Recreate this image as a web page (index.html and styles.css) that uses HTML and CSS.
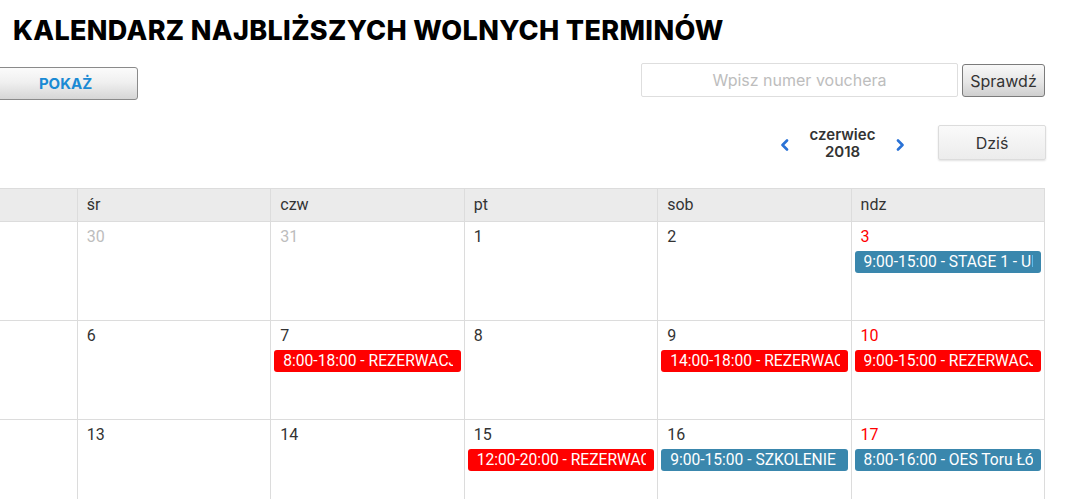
FILE: index.html
```html
<!DOCTYPE html>
<html lang="pl">
<head>
<meta charset="utf-8">
<title>Kalendarz</title>
<link rel="stylesheet" href="styles.css">
</head>
<body>
<header class="page-head">
  <h1 class="title">KALENDARZ NAJBLIŻSZYCH WOLNYCH TERMINÓW</h1>
</header>

<div class="toolbar">
  <button class="btn-show" type="button">POKAŻ</button>
  <form class="voucher">
    <input class="voucher-input" type="text" placeholder="Wpisz numer vouchera">
    <button class="btn-check" type="button">Sprawdź</button>
  </form>
</div>

<div class="cal-nav">
  <button class="arrow" type="button" aria-label="poprzedni">
    <svg width="10" height="12" viewBox="0 0 10 12"><path d="M7 1.5 L2.5 6 L7 10.5" fill="none" stroke="#2a72d6" stroke-width="2.6" stroke-linecap="round" stroke-linejoin="round"/></svg>
  </button>
  <div class="month"><span>czerwiec</span><span>2018</span></div>
  <button class="arrow" type="button" aria-label="następny">
    <svg width="10" height="12" viewBox="0 0 10 12"><path d="M3 1.5 L7.5 6 L3 10.5" fill="none" stroke="#2a72d6" stroke-width="2.6" stroke-linecap="round" stroke-linejoin="round"/></svg>
  </button>
  <button class="btn-today" type="button">Dziś</button>
</div>

<div class="calendar">
  <div class="cal-head">
    <div class="hcell">pon</div><div class="hcell">wt</div><div class="hcell">śr</div><div class="hcell">czw</div><div class="hcell">pt</div><div class="hcell">sob</div><div class="hcell">ndz</div>
  </div>
  <div class="week">
    <div class="day other"><span class="num">28</span></div>
    <div class="day other"><span class="num">29</span></div>
    <div class="day other"><span class="num">30</span></div>
    <div class="day other"><span class="num">31</span></div>
    <div class="day"><span class="num">1</span></div>
    <div class="day"><span class="num">2</span></div>
    <div class="day sun"><span class="num">3</span><div class="event blue"><span class="event-text">9:00-15:00 - STAGE 1 - UI</span></div></div>
  </div>
  <div class="week">
    <div class="day"><span class="num">4</span></div>
    <div class="day"><span class="num">5</span></div>
    <div class="day"><span class="num">6</span></div>
    <div class="day"><span class="num">7</span><div class="event red"><span class="event-text">8:00-18:00 - REZERWACJA</span></div></div>
    <div class="day"><span class="num">8</span></div>
    <div class="day"><span class="num">9</span><div class="event red"><span class="event-text">14:00-18:00 - REZERWACJA</span></div></div>
    <div class="day sun"><span class="num">10</span><div class="event red"><span class="event-text">9:00-15:00 - REZERWACJA</span></div></div>
  </div>
  <div class="week">
    <div class="day"><span class="num">11</span></div>
    <div class="day"><span class="num">12</span></div>
    <div class="day"><span class="num">13</span></div>
    <div class="day"><span class="num">14</span></div>
    <div class="day"><span class="num">15</span><div class="event red"><span class="event-text">12:00-20:00 - REZERWACJA</span></div></div>
    <div class="day"><span class="num">16</span><div class="event blue"><span class="event-text">9:00-15:00 - SZKOLENIE</span></div></div>
    <div class="day sun"><span class="num">17</span><div class="event blue"><span class="event-text">8:00-16:00 - OES Toru Łódź</span></div></div>
  </div>
</div>
</body>
</html>
```

FILE: styles.css
```css
html, body {
  margin: 0;
  padding: 0;
  background: #fff;
  overflow: hidden;
}
body {
  font-family: Roboto, "Liberation Sans", sans-serif;
  color: #333;
}

.page-head {
  padding: 13px 0 0 13px;
}
.title {
  margin: 0;
  font-family: Inter, "Liberation Sans", sans-serif;
  font-weight: 800;
  font-size: 27px;
  line-height: 36px;
  color: #000;
  letter-spacing: 0.35px;
}

.toolbar {
  display: flex;
  justify-content: space-between;
  align-items: flex-start;
  margin-top: 14px;
  padding-right: 20px;
}
.btn-show {
  margin-left: -7px;
  margin-top: 4px;
  width: 145px;
  height: 33px;
  border: 1px solid #8a8a8a;
  border-radius: 3px;
  background: linear-gradient(#fbfbfb, #f0f0f0 45%, #d6d6d6);
  font-family: Inter, "Liberation Sans", sans-serif;
  font-weight: 700;
  font-size: 15px;
  color: #1a8ad4;
  padding: 0;
}
.voucher {
  display: flex;
  gap: 4px;
  align-items: flex-start;
}
.voucher-input {
  box-sizing: border-box;
  width: 317px;
  height: 34px;
  border: 1px solid #dedede;
  border-radius: 2px;
  text-align: center;
  font-family: Inter, "Liberation Sans", sans-serif;
  font-size: 16px;
  color: #333;
  padding: 0 8px;
  outline: none;
}
.voucher-input::placeholder {
  color: #bdbdbd;
}
.btn-check {
  margin-top: 1px;
  box-sizing: border-box;
  width: 83px;
  height: 33px;
  border: 1px solid #7b7b7b;
  border-radius: 3px;
  background: linear-gradient(#f8f8f8, #e6e6e6 55%, #cfcfcf);
  font-family: Inter, "Liberation Sans", sans-serif;
  font-size: 16px;
  color: #333;
  padding: 0;
}

.cal-nav {
  display: flex;
  justify-content: flex-end;
  align-items: center;
  padding-right: 19px;
  margin-top: 25px;
}
.arrow {
  border: 0;
  background: none;
  padding: 0;
  width: 12px;
  height: 14px;
  display: flex;
  align-items: center;
  justify-content: center;
  margin-top: 4px;
}
.month {
  display: flex;
  flex-direction: column;
  align-items: center;
  width: 103px;
  font-family: Inter, "Liberation Sans", sans-serif;
  font-weight: 600;
  font-size: 15px;
  line-height: 17px;
  color: #333;
}
.btn-today {
  margin-left: 32px;
  box-sizing: border-box;
  width: 108px;
  height: 35px;
  border: 1px solid #dcdcdc;
  border-radius: 2px;
  background: linear-gradient(#fafafa, #ececec);
  box-shadow: 0 1px 2px rgba(0,0,0,0.12);
  font-family: Inter, "Liberation Sans", sans-serif;
  font-size: 16px;
  color: #333;
  padding: 0;
}

.calendar {
  margin-top: 28px;
  margin-left: -310px;
  width: 1354px;
  border-left: 1px solid #dcdcdc;
}
.cal-head,
.week {
  display: grid;
  grid-template-columns: repeat(7, 1fr);
}
.cal-head {
  background: #ebebeb;
  border-top: 1px solid #dcdcdc;
  border-bottom: 1px solid #dcdcdc;
}
.hcell {
  height: 32px;
  line-height: 32px;
  padding-left: 9px;
  font-size: 16px;
  color: #333;
  border-right: 1px solid #dcdcdc;
}
.day {
  height: 92px;
  border-right: 1px solid #dcdcdc;
  border-bottom: 1px solid #dcdcdc;
  padding: 6px 2px 0 2px;
  box-sizing: content-box;
  min-width: 0;
}
.num {
  display: block;
  padding-left: 7px;
  height: 23px;
  line-height: 18px;
  font-size: 16px;
  color: #333;
}
.other .num {
  color: #bdbdbd;
}
.sun .num {
  color: #ff0000;
}
.event {
  margin-left: 1px;
  margin-right: 1px;
  height: 22px;
  line-height: 22px;
  border-radius: 3px;
  padding: 0 8px 0 9px;
  color: #fff;
  font-size: 15.6px;
}
.event-text {
  display: block;
  white-space: nowrap;
  overflow: hidden;
}
.event.blue {
  background: #3a87ad;
}
.event.red {
  background: #ff0000;
}
```
